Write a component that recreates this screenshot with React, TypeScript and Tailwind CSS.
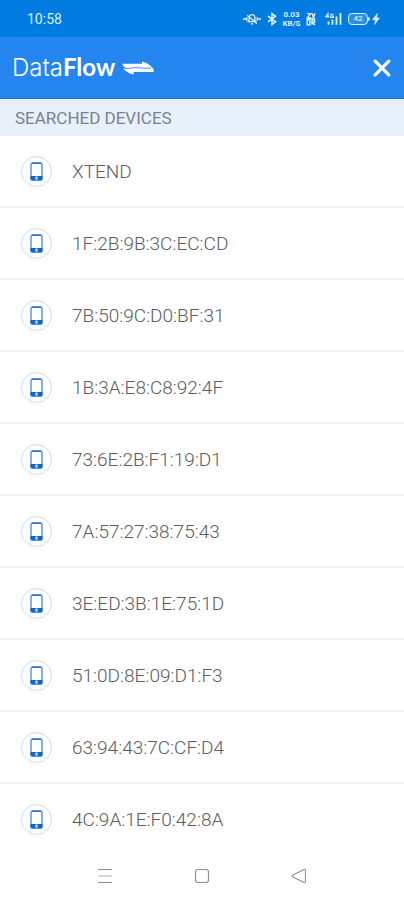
const devices = [
  "XTEND",
  "1F:2B:9B:3C:EC:CD",
  "7B:50:9C:D0:BF:31",
  "1B:3A:E8:C8:92:4F",
  "73:6E:2B:F1:19:D1",
  "7A:57:27:38:75:43",
  "3E:ED:3B:1E:75:1D",
  "51:0D:8E:09:D1:F3",
  "63:94:43:7C:CF:D4",
  "4C:9A:1E:F0:42:8A",
];

function PhoneIcon() {
  return (
    <svg viewBox="0 0 13 19" className="h-[19px] w-[13px]" aria-hidden="true">
      <rect x="1" y="1" width="11" height="17" rx="1.8" fill="#fff" stroke="#6a9fe0" strokeWidth="1.6" />
      <path d="M1.8 1.2h9.4" stroke="#2f77cf" strokeWidth="1.6" />
      <path d="M0.5 14h12v2.8a1.8 1.8 0 0 1-1.8 1.8H2.3a1.8 1.8 0 0 1-1.8-1.8z" fill="#1266c8" />
      <rect x="5.4" y="14.4" width="2.2" height="3.4" rx="0.6" fill="#c5dcf8" />
    </svg>
  );
}

function StatusBar() {
  return (
    <div className="flex h-[37px] items-center justify-between bg-[#007ce0] pl-[27px] pr-6 text-[#dcefff]">
      <time className="text-sm">10:58</time>
      <div className="flex items-center">
        <svg viewBox="0 0 18 14" className="h-3.5 w-[18px]" fill="none" stroke="currentColor" strokeWidth="1.3" aria-label="Vibrate" role="img">
          <path d="M0 7h4M14 7h4M5.2 9.6h7.6L11.9 8V5.6a2.9 2.9 0 0 0-5.8 0V8zM7.8 11.8h2.4M4.2 3.2l9.6 8.4M3.8 5.2v3.6M14.2 5.2v3.6" />
        </svg>
        <svg viewBox="0 0 10 14" className="ml-[6px] h-3.5 w-2.5" fill="none" stroke="currentColor" strokeWidth="1.6" aria-label="Bluetooth" role="img">
          <path d="M1 4.2l7.6 5.6L5 12.4V1.6l3.6 2.6L1 9.8" />
        </svg>
        <div className="ml-[5px] flex w-[19px] flex-col items-center text-[8px] font-bold leading-[9px]">
          <span>0.03</span>
          <span>KB/S</span>
        </div>
        <svg viewBox="0 0 10 14" className="ml-[5px] h-3.5 w-2.5" fill="none" stroke="currentColor" strokeWidth="1.4" aria-label="Phone vibration" role="img">
          <path d="M1 1.6h3.6L1.2 6h3.8M6 1.2l1.4 4.4L9 1.2M1.2 8v4.8h2.6V8zM6 12.8V8h2.6v2.4H6l3 2.6M1 7l8-1" />
        </svg>
        <svg viewBox="0 0 17 14" className="ml-[9px] h-3.5 w-[17px]" fill="none" stroke="currentColor" aria-label="4G signal" role="img">
          <path d="M3 5.8V1.5L0.8 4.6h3.4M8.4 2.2H5.8v3.2h2.6V4H7.2" strokeWidth="1.1" />
          <path d="M3.5 12.8V9.4M7.5 12.8V7.4M11.5 12.8V4.6M15.5 12.8V1" strokeWidth="1.8" />
        </svg>
        <div className="ml-[6px] flex h-3 w-5 items-center justify-center rounded-[4px] border border-current bg-[#2890e6] text-[8px] font-medium leading-none">42</div>
        <span className="h-1 w-0.5 rounded-r-sm bg-current" />
        <svg viewBox="0 0 8 12" className="ml-0.5 h-3 w-2" fill="currentColor" stroke="currentColor" strokeWidth="0.6" aria-label="Charging" role="img">
          <path d="M5.4 0.4L0.5 6.8h3L2.6 11.6l4.9-6.6H4.6z" />
        </svg>
      </div>
    </div>
  );
}

function Header() {
  return (
    <header className="flex h-[62px] items-center justify-between border-b border-[#1079e4] bg-[#2585ee] pl-3 pr-1 text-white">
      <div className="flex items-center">
        <h1 className="text-2xl leading-8">
          <span className="font-['Inter',sans-serif] font-light">Data</span>
          <b className="font-['Lato',sans-serif] font-bold">Flow</b>
        </h1>
        <svg viewBox="0 0 32 14" className="ml-[7px] h-3.5 w-8" fill="currentColor" aria-hidden="true">
          <path d="M0.4 2.8H20V0.4C24 1.4 28 3.6 30 6.4c1.4 1 1.9 2.4 1.6 4.6H11.6v2.6C7.4 12.6 3.4 10.4 1.2 7.4H5C2.4 6.6 0.6 5 0.4 2.8z" />
          <path d="M3 7.4c5 .4 7-.9 12-.7s8 .9 14 .3" fill="none" stroke="#2585ee" strokeWidth="0.9" />
        </svg>
      </div>
      <button type="button" aria-label="Close" className="flex size-9 items-center justify-center">
        <svg viewBox="0 0 18 18" className="size-[18px]" fill="none" stroke="currentColor" strokeWidth="3.2" strokeLinecap="round">
          <path d="M2.2 2.2l13.6 13.6M15.8 2.2L2.2 15.8" />
        </svg>
      </button>
    </header>
  );
}

function NavBar() {
  return (
    <nav className="flex h-11 items-start justify-center gap-[73px] pt-2 text-[#929292]" aria-label="System">
      <button type="button" aria-label="Recent apps" className="flex size-6 items-center justify-center">
        <svg viewBox="0 0 16 16" className="size-4" fill="none" stroke="currentColor" strokeWidth="1.2">
          <path d="M1 1.5h14M1 14.5h14" />
          <path d="M1 8h14" opacity="0.6" />
        </svg>
      </button>
      <button type="button" aria-label="Home" className="flex size-6 items-center justify-center">
        <svg viewBox="0 0 16 16" className="size-4" fill="none" stroke="currentColor" strokeWidth="1.2">
          <rect x="1.5" y="1.5" width="13" height="13" rx="2.4" />
        </svg>
      </button>
      <button type="button" aria-label="Back" className="flex size-6 items-center justify-center">
        <svg viewBox="0 0 16 16" className="size-4" fill="none" stroke="currentColor" strokeWidth="1.1" strokeLinejoin="round">
          <path d="M1.6 7.2L13 1.4q1.4-.4 1.4 1v11.2q0 1.4-1.4 1L1.6 8.8q-1-.8 0-1.6z" />
        </svg>
      </button>
    </nav>
  );
}

export default function App() {
  return (
    <div className="flex min-h-screen flex-col bg-white font-['Roboto',sans-serif]">
      <StatusBar />
      <Header />
      <main className="flex-1">
        <h2 className="flex h-[37px] items-center bg-[#e8f0fc] px-[15px] pt-0.5 text-[17px] text-[#7c828c]">
          SEARCHED DEVICES
        </h2>
        <ul className="divide-y-2 divide-[#f1f1f2]">
          {devices.map((name) => (
            <li key={name}>
              <button type="button" className="flex h-[70px] w-full items-center gap-5 px-[21px] pt-px text-left">
                <span className="flex size-[31px] items-center justify-center rounded-full border border-[#c9dcf3]">
                  <PhoneIcon />
                </span>
                <span className="pt-0.5 text-[19px] font-light text-[#5c5c5c]">{name}</span>
              </button>
            </li>
          ))}
        </ul>
      </main>
      <NavBar />
    </div>
  );
}
